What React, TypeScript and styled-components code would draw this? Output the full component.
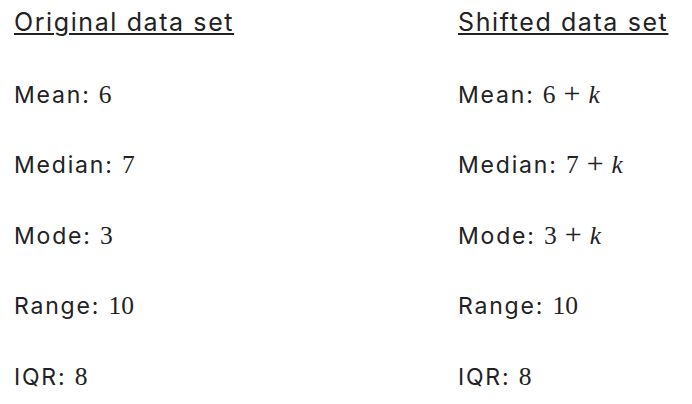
import React from "react";
import styled, { createGlobalStyle } from "styled-components";

const Global = createGlobalStyle`
  html, body { margin: 0; padding: 0; background: #ffffff; overflow: hidden; }
  body { font-family: "Inter", "Open Sans", sans-serif; color: #222222; }
`;

const Page = styled.div`
  width: 692px;
  height: 404px;
  display: grid;
  grid-template-columns: 444px 1fr;
  padding: 0 0 0 14px;
  box-sizing: border-box;
  overflow: hidden;
`;

const Column = styled.div`
  display: flex;
  flex-direction: column;
`;

const Heading = styled.div`
  font-size: 25px;
  line-height: 30px;
  height: 30px;
  margin-top: 7px;
  letter-spacing: 1.6px;
  text-decoration: underline;
  text-decoration-thickness: 2px;
  text-underline-offset: 2px;
  white-space: nowrap;
`;

const Rows = styled.div`
  display: flex;
  flex-direction: column;
  gap: 40.5px;
  margin-top: 42.7px;
`;

const Row = styled.div`
  font-size: 23px;
  line-height: 30px;
  height: 30px;
  letter-spacing: 1.8px;
  white-space: nowrap;
`;

const Math = styled.span`
  font-family: "Liberation Serif", "Times New Roman", serif;
  font-size: 25.5px;
  line-height: 0;
  letter-spacing: 0;
`;

const Var = styled.i`
  font-style: italic;
`;

const Op = styled.span`
  font-size: 1.18em;
  line-height: 0;
  margin: 0 8px;
`;

type Stat = { label: string; value: string; shifted: boolean };

const stats: Stat[] = [
  { label: "Mean", value: "6", shifted: true },
  { label: "Median", value: "7", shifted: true },
  { label: "Mode", value: "3", shifted: true },
  { label: "Range", value: "10", shifted: false },
  { label: "IQR", value: "8", shifted: false },
];

function Data({ title, shift }: { title: string; shift: boolean }) {
  return (
    <Column>
      <Heading>{title}</Heading>
      <Rows>
        {stats.map((s) => (
          <Row key={s.label}>
            {s.label}:{" "}
            <Math>
              {s.value}
              {shift && s.shifted && (
                <>
                  <Op>+</Op>
                  <Var>k</Var>
                </>
              )}
            </Math>
          </Row>
        ))}
      </Rows>
    </Column>
  );
}

export default function App() {
  return (
    <>
      <Global />
      <Page>
        <Data title="Original data set" shift={false} />
        <Data title="Shifted data set" shift={true} />
      </Page>
    </>
  );
}
